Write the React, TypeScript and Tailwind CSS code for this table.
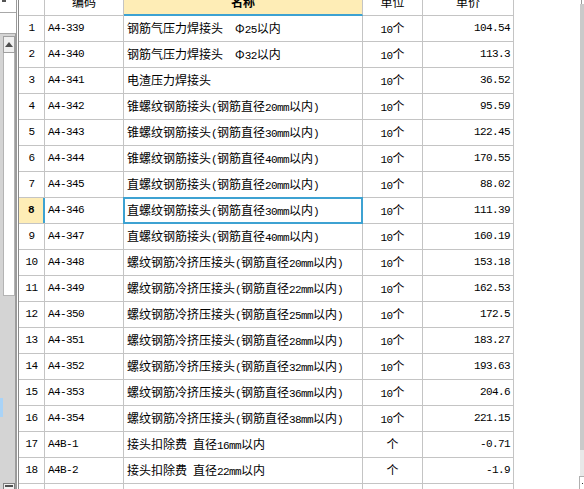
import React from 'react'

type Row = {
  no: number
  code: string
  name: string
  unit: string
  price: string
}

const SERIES = '螺纹钢筋冷挤压接头(钢筋直径'

const ROWS: Row[] = [
  { no: 1, code: 'A4-339', name: '钢筋气压力焊接头  Φ25以内', unit: '10个', price: '104.54' },
  { no: 2, code: 'A4-340', name: '钢筋气压力焊接头  Φ32以内', unit: '10个', price: '113.3' },
  { no: 3, code: 'A4-341', name: '电渣压力焊接头', unit: '10个', price: '36.52' },
  { no: 4, code: 'A4-342', name: '锥螺纹钢筋接头(钢筋直径20mm以内)', unit: '10个', price: '95.59' },
  { no: 5, code: 'A4-343', name: '锥螺纹钢筋接头(钢筋直径30mm以内)', unit: '10个', price: '122.45' },
  { no: 6, code: 'A4-344', name: '锥螺纹钢筋接头(钢筋直径40mm以内)', unit: '10个', price: '170.55' },
  { no: 7, code: 'A4-345', name: '直螺纹钢筋接头(钢筋直径20mm以内)', unit: '10个', price: '88.02' },
  { no: 8, code: 'A4-346', name: '直螺纹钢筋接头(钢筋直径30mm以内)', unit: '10个', price: '111.39' },
  { no: 9, code: 'A4-347', name: '直螺纹钢筋接头(钢筋直径40mm以内)', unit: '10个', price: '160.19' },
  { no: 10, code: 'A4-348', name: SERIES + '20mm以内)', unit: '10个', price: '153.18' },
  { no: 11, code: 'A4-349', name: SERIES + '22mm以内)', unit: '10个', price: '162.53' },
  { no: 12, code: 'A4-350', name: SERIES + '25mm以内)', unit: '10个', price: '172.5' },
  { no: 13, code: 'A4-351', name: SERIES + '28mm以内)', unit: '10个', price: '183.27' },
  { no: 14, code: 'A4-352', name: SERIES + '32mm以内)', unit: '10个', price: '193.63' },
  { no: 15, code: 'A4-353', name: SERIES + '36mm以内)', unit: '10个', price: '204.6' },
  { no: 16, code: 'A4-354', name: SERIES + '38mm以内)', unit: '10个', price: '221.15' },
  { no: 17, code: 'A4B-1', name: '接头扣除费 直径16mm以内', unit: '个', price: '-0.71' },
  { no: 18, code: 'A4B-2', name: '接头扣除费 直径22mm以内', unit: '个', price: '-1.9' },
]

const SELECTED = 8

const cjk = "font-['Noto_Sans_CJK_SC',sans-serif]"
const mono = "font-['Liberation_Mono',monospace] text-[11px] tracking-[-0.6px]"

// half-width runs get the narrow mono face, like the old SimSun grid
function Mixed({ text }: { text: string }) {
  const parts = text.split(/([\x20-\x7e]+)/).filter((p) => p !== '')
  return (
    <>
      {parts.map((p, i) =>
        /^[\x20-\x7e]+$/.test(p) ? (
          <span key={i} className={mono}>
            {p}
          </span>
        ) : (
          <span key={i} className={cjk}>
            {p}
          </span>
        ),
      )}
    </>
  )
}

function LeftStrip() {
  return (
    <div className="flex flex-col w-[17px] shrink-0 border-r border-[#9a9a9a]">
      {/* bottom of a toolbar button, mostly scrolled away */}
      <div className="h-[13px] shrink-0 border-b border-[#a8a8a8] bg-white flex justify-start pl-[2px]">
        <div className="w-[4px] h-[2px] bg-[#555]" />
      </div>
      <div className="h-[21px] shrink-0 border-b border-[#a8a8a8] bg-white" />
      <div className="flex-1 flex bg-[#d4d4d4]">
        <div className="w-[3px] flex flex-col">
          <div className="h-[364px] shrink-0" />
          <div className="h-[19px] shrink-0 bg-[#a9d3f7]" />
        </div>
        <div className="flex-1 flex flex-col border-r border-[#9c9c9c]">
          <div className="h-[17px] shrink-0 mt-[2px] bg-[#f0f0f0] border border-[#a0a0a0] flex items-center justify-center">
            <div className="w-0 h-0 border-l-[4px] border-r-[4px] border-b-[5px] border-l-transparent border-r-transparent border-b-[#505050]" />
          </div>
          <div className="h-[243px] shrink-0 bg-white border-x border-b border-[#b4b4b4]" />
          <div className="flex-1" />
          <div className="h-[6px] shrink-0 bg-[#f0f0f0] border-t border-x border-[#808080] flex justify-center pt-[1px]">
            <div className="w-[8px] h-[2px] bg-[#505050]" />
          </div>
        </div>
      </div>
    </div>
  )
}

function HeaderRow() {
  return (
    <div className={`flex h-[16px] shrink-0 overflow-hidden text-[12px] ${cjk}`}>
      <div className="w-[26px] border-r border-b border-[#c4c4c4] bg-white" />
      <div className="w-[79px] border-r border-b border-[#c4c4c4] bg-white">
        <div className="h-[26px] -mt-[11px] flex items-center justify-center">编码</div>
      </div>
      <div className="w-[239px] border-r border-[#c4c4c4] border-b-2 border-b-[#3da2d2] bg-[#feedb6]">
        <div className="h-[26px] -mt-[11px] flex items-center justify-center font-bold">名称</div>
      </div>
      <div className="w-[60px] border-r border-b border-[#c4c4c4] bg-white">
        <div className="h-[26px] -mt-[11px] flex items-center justify-center">单位</div>
      </div>
      <div className="w-[91px] border-r border-b border-[#c4c4c4] bg-white">
        <div className="h-[26px] -mt-[11px] flex items-center justify-center">单价</div>
      </div>
    </div>
  )
}

function DataRow({ row }: { row: Row }) {
  const sel = row.no === SELECTED
  return (
    <div className="flex h-[26px] shrink-0 border-b border-[#c4c4c4] text-[12px] text-black">
      <div
        className={
          sel
            ? `w-[26px] flex items-center justify-center bg-[#feedb6] border-r-2 border-[#3da2d2] font-bold ${mono}`
            : `w-[26px] flex items-center justify-center border-r border-[#c4c4c4] ${mono}`
        }
      >
        {row.no}
      </div>
      <div className={`w-[79px] flex items-center pl-[3px] border-r border-[#c4c4c4] ${mono}`}>
        {row.code}
      </div>
      <div className="relative w-[239px] flex items-center pl-[3px] border-r border-[#c4c4c4] whitespace-pre">
        <span>
          <Mixed text={row.name} />
        </span>
        {sel && (
          <div className="absolute top-[-1px] left-[-1px] right-[-1px] bottom-[-1px] border-2 border-[#3da2d2]" />
        )}
      </div>
      <div className="w-[60px] flex items-center justify-center border-r border-[#c4c4c4]">
        <span>
          <Mixed text={row.unit} />
        </span>
      </div>
      <div className={`w-[91px] flex items-center justify-end pr-[3px] border-r border-[#c4c4c4] ${mono}`}>
        {row.price}
      </div>
    </div>
  )
}

function RightScrollbar() {
  return (
    <div className="w-[5px] shrink-0 flex flex-col">
      <div className="h-[4px] shrink-0 flex justify-end pr-[2px]">
        <div className="w-px h-full bg-[#9a9a9a]" />
      </div>
      <div className="h-[446px] shrink-0 ml-[1px] bg-[#cacaca]" />
      <div className="h-[26px] shrink-0 ml-[1px] bg-[#e8e8e8]" />
      <div className="flex-1 bg-white border-l border-t border-[#b0b0b0] flex items-center justify-center">
        <div className="w-px h-px bg-[#333]" />
      </div>
    </div>
  )
}

export default function App() {
  return (
    <div className="flex w-[584px] h-[489px] overflow-hidden bg-white">
      <LeftStrip />
      <div className="w-[1px] shrink-0 bg-white" />
      <div className="flex flex-col w-[496px] shrink-0 border-l border-[#8a8a8a]">
        <HeaderRow />
        {ROWS.map((r) => (
          <DataRow key={r.no} row={r} />
        ))}
        <div className="flex h-[26px] shrink-0">
          <div className="w-[26px] border-r border-[#c4c4c4]" />
          <div className="w-[79px] border-r border-[#c4c4c4]" />
          <div className="w-[239px] border-r border-[#c4c4c4]" />
          <div className="w-[60px] border-r border-[#c4c4c4]" />
          <div className="w-[91px] border-r border-[#c4c4c4]" />
        </div>
      </div>
      <div className="flex-1" />
      <RightScrollbar />
    </div>
  )
}
